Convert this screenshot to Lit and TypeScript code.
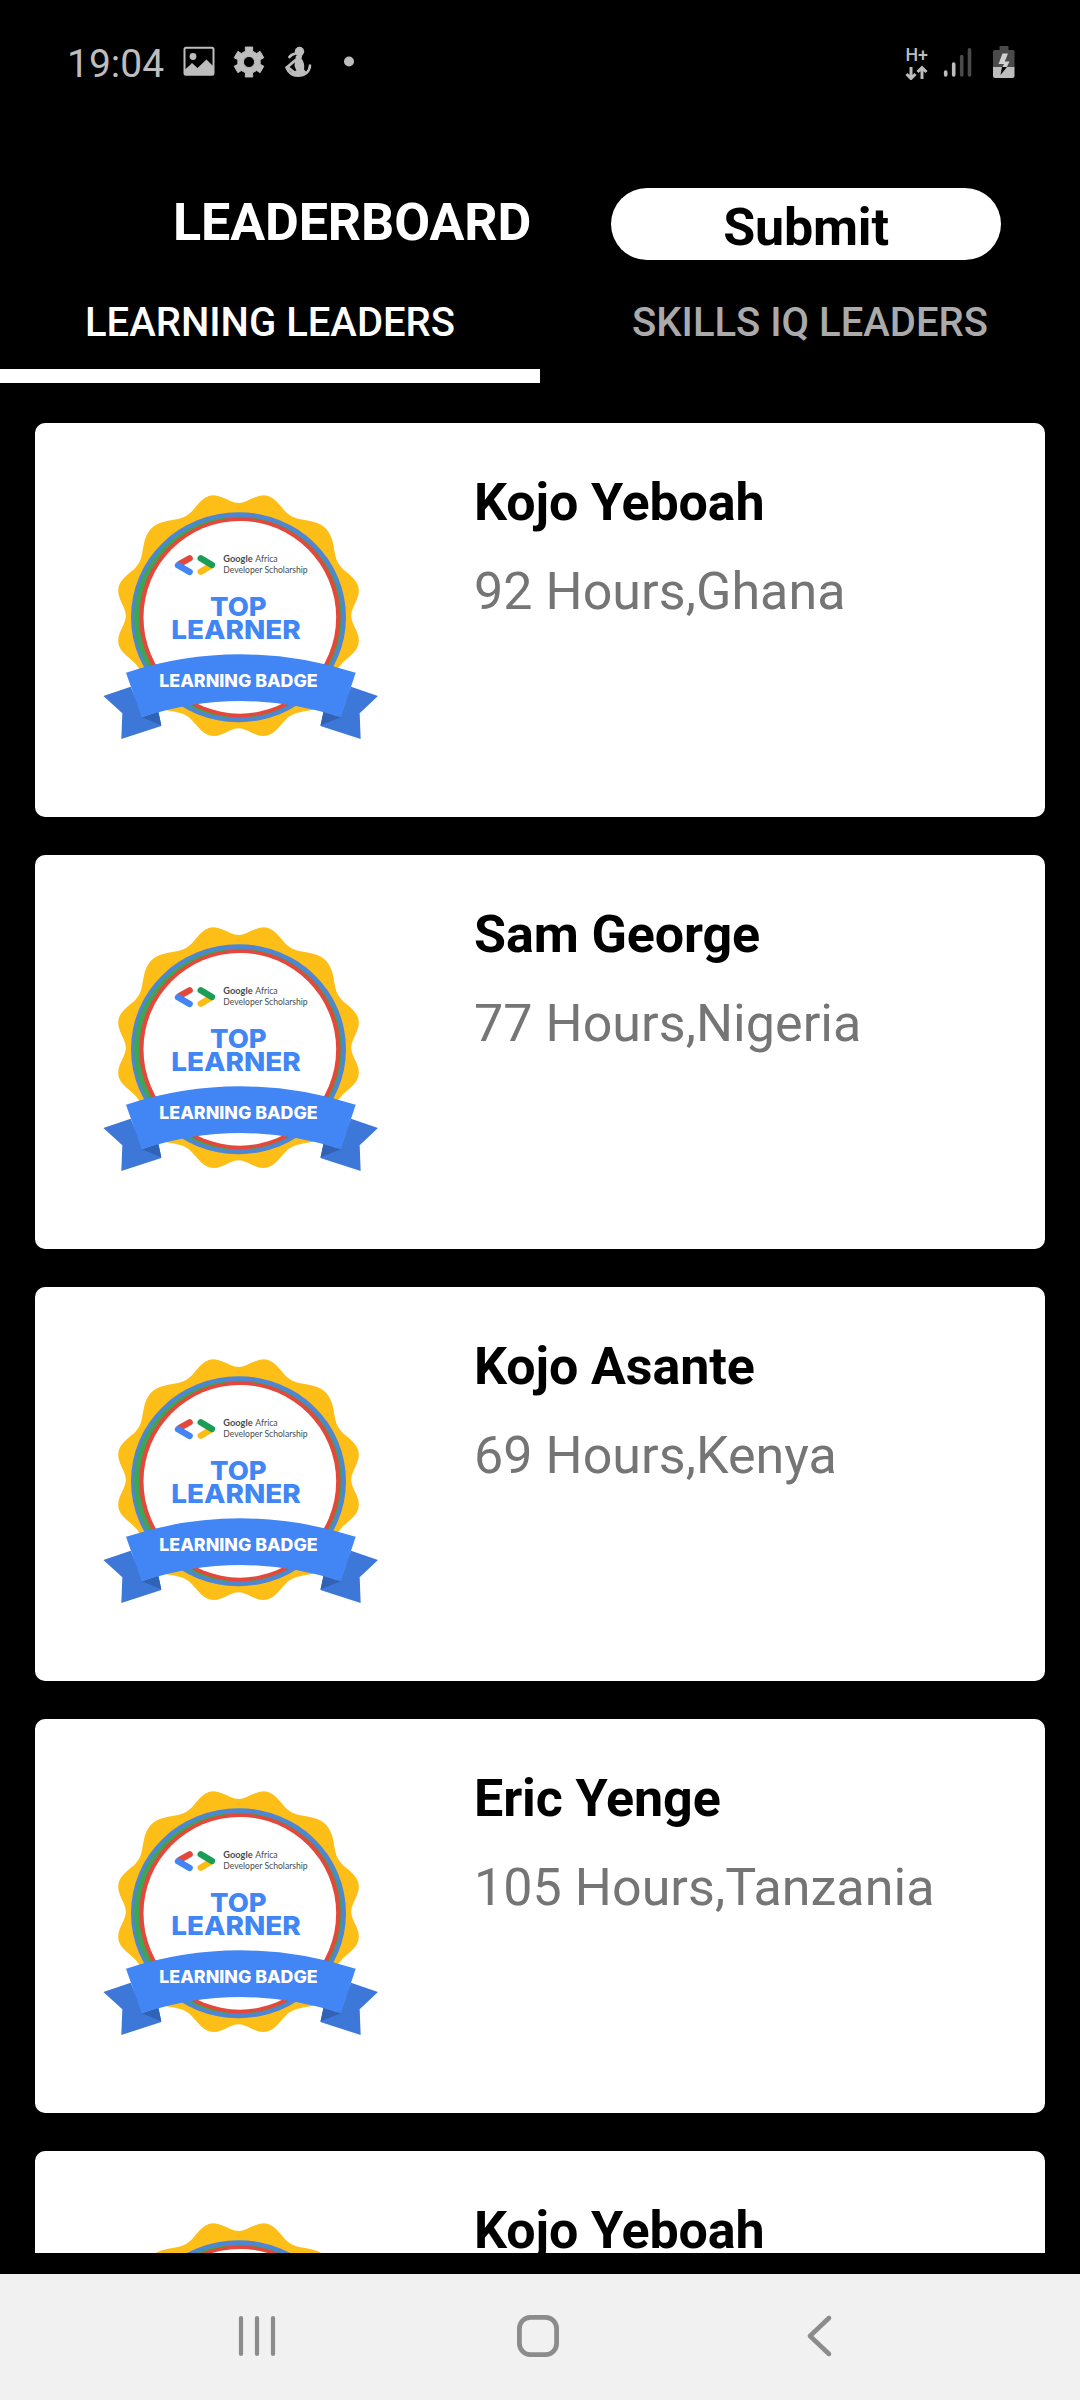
import { LitElement, html, css, svg } from "lit";
import { customElement, property } from "lit/decorators.js";

interface Leader {
  name: string;
  hours: number;
  country: string;
}

const LEADERS: Leader[] = [
  { name: "Kojo Yeboah", hours: 92, country: "Ghana" },
  { name: "Sam George", hours: 77, country: "Nigeria" },
  { name: "Kojo Asante", hours: 69, country: "Kenya" },
  { name: "Eric Yenge", hours: 105, country: "Tanzania" },
  { name: "Kojo Yeboah", hours: 92, country: "Ghana" },
];

/** Outline of the twelve-lobed rosette; the diagonal lobes are a little wider than the others. */
function rosette(cx: number, cy: number, base: number, wave: number): string {
  const points: string[] = [];
  for (let a = 0; a < 360; a += 2) {
    const t = (a * Math.PI) / 180;
    const phase = t + 0.035 * Math.sin(4 * t);
    const r = base - wave * Math.cos(12 * phase);
    points.push(`${(cx + r * Math.sin(t)).toFixed(1)} ${(cy - r * Math.cos(t)).toFixed(1)}`);
  }
  return `M${points.join("L")}Z`;
}

/** Closed outline of a cog with the given number of teeth. */
function cog(c: number, outer: number, inner: number, teeth: number): string {
  const points: string[] = [];
  const step = 360 / teeth;
  for (let i = 0; i < teeth; i++) {
    for (const [off, r] of [[-18, inner], [-14, outer], [14, outer], [18, inner]]) {
      const t = ((i * step + off) * Math.PI) / 180;
      points.push(`${(c + r * Math.sin(t)).toFixed(2)} ${(c - r * Math.cos(t)).toFixed(2)}`);
    }
  }
  return `M${points.join("L")}Z`;
}

const ROSETTE = rosette(445.5, 437, 354, 16);
const COG = cog(16, 15.4, 11.4, 6);

@customElement("status-bar")
class StatusBar extends LitElement {
  static styles = css`
    :host {
      display: flex;
      align-items: center;
      height: 124px;
      box-sizing: border-box;
      padding: 0 65px 0 67px;
      color: #bdbdbd;
      font: 400 39px/46px Roboto, sans-serif;
    }
    svg { display: block; flex: none; }
    .time { width: 116px; padding-top: 4px; }
    .icons { display: flex; align-items: center; gap: 18px; }
    .dot { margin-left: 12px; }
    .signals { display: flex; align-items: center; margin-left: auto; }
    .bars { margin-left: 13px; }
    .battery { margin-left: 21px; }
  `;
  render() {
    return html`
      <span class="time">19:04</span>
      <div class="icons">
        <svg width="32" height="32" viewBox="0 0 32 32">
          <rect x="1.500" y="1.700" width="29" height="27" rx="1.500" fill="none" stroke="#bdbdbd" stroke-width="2"/>
          <circle cx="10" cy="10.500" r="3.400" fill="#bdbdbd"/>
          <path d="M2 23.500L6 20L9 17L14.500 22L23.500 13.500L30 20V28.500H2Z" fill="#bdbdbd"/>
        </svg>
        <svg width="32" height="32" viewBox="0 0 32 32">
          <path fill="#bdbdbd" stroke="#bdbdbd" stroke-width="1" stroke-linejoin="round" fill-rule="evenodd" d="${COG}M16 10.500a5.500 5.500 0 1 0 0.010 0Z"/>
        </svg>
        <svg width="30" height="32" viewBox="0 0 30 32">
          <circle cx="16.500" cy="5.500" r="4.700" fill="#bdbdbd"/>
          <path d="M13 9.500L19.500 9L18.500 12.500Q22 17 21 24L14 26L11.500 20L12 14Z" fill="#bdbdbd"/>
          <path d="M6.500 11Q8 8.500 12.500 7.500M12 14.500L4.500 21L12 27" fill="none" stroke="#bdbdbd" stroke-width="2.800" stroke-linecap="round"/>
          <path d="M3.500 21.500C5.500 26.500 8.500 29.500 15 29.800C22 29.800 26.500 26 27 19.500" fill="none" stroke="#bdbdbd" stroke-width="2.600" stroke-linecap="round"/>
          <path d="M8.500 26L20 22.500L23.500 26Q19 30 14.500 30Q10 29.500 8.500 26Z" fill="#bdbdbd"/>
        </svg>
        <svg class="dot" width="12" height="12" viewBox="0 0 12 12"><circle cx="6" cy="5.500" r="5" fill="#bdbdbd"/></svg>
      </div>
      <div class="signals">
        <svg width="24" height="36" viewBox="0 0 24 36">
          <text x="0.500" y="16.500" font-family="Roboto" font-weight="500" font-size="19" textLength="22.500" lengthAdjust="spacingAndGlyphs" fill="#bdbdbd">H+</text>
          <path d="M6 23V34.500M1.500 30L6 34.500L10.500 30M17 35V23.500M12.500 28L17 23.500L21.500 28" fill="none" stroke="#bdbdbd" stroke-width="3"/>
        </svg>
        <svg class="bars" width="30" height="32" viewBox="0 0 30 32" stroke-width="3.600" stroke-linecap="round">
          <path d="M3.700 26V29M11.700 18V29" stroke="#bdbdbd"/>
          <path d="M19.700 10.500V29M27.500 3.800V29" stroke="#4a4a4a"/>
        </svg>
        <svg class="battery" width="22" height="34" viewBox="0 0 22 34">
          <path d="M6.500 1h9v4H20Q21.500 5 21.500 6.500V22H0V6.500Q0 5 1.500 5H6.500Z" fill="#4a4a4a"/>
          <path d="M0 22H21.500V31Q21.500 33 19.500 33H2Q0 33 0 31Z" fill="#bdbdbd"/>
          <path d="M9.500 8.500H15L11.800 16.500H16.500L13.800 22H9.600L11 19H5.500Z" fill="#d0d0d0"/>
          <path d="M9 22H14L7.500 30Z" fill="#000"/>
        </svg>
      </div>
    `;
  }
}

@customElement("learner-badge")
class LearnerBadge extends LitElement {
  static styles = css`
    :host { display: block; width: 300px; height: 290px; }
    svg { display: block; }
    .label { font-family: Inter, sans-serif; font-weight: 800; }
    .small { font-family: Lato, sans-serif; font-size: 28px; fill: #4a4a4a; }
    .strong { font-weight: 700; }
  `;
  render() {
    return html`
      <svg width="300" height="290" viewBox="0 0 900 870">
        <path d=${ROSETTE} fill="#fcbe17"/>
        <ellipse cx="445.500" cy="441.500" rx="322.500" ry="315" fill="#4d86d4"/>
        <ellipse cx="444" cy="442" rx="312" ry="302" fill="#3ea556"/>
        <ellipse cx="449.500" cy="442" rx="302" ry="300" fill="#e3483a"/>
        <ellipse cx="449.500" cy="442" rx="289" ry="289" fill="#fff"/>
        <g stroke-width="19" stroke-linecap="round" fill="none">
          <path d="M270 281L299 265" stroke="#e3483a"/>
          <path d="M264 286L299 306" stroke="#4285f4"/>
          <path d="M332 305L361 288" stroke="#fbbc15"/>
          <path d="M332 265L366 285" stroke="#1a9d54"/>
        </g>
        ${this.caption("Google", 400, 277, 88, "small strong")}
        ${this.caption("Africa", 496, 277, 67, "small")}
        ${this.caption("Developer Scholarship", 400, 308, 253, "small")}
        <g fill="#4285f4" font-size="78">
          ${this.caption("TOP", 360, 437, 170, "label")}
          ${this.caption("LEARNER", 244, 507, 388, "label")}
        </g>
        <path d="M40 678L122 650L160 740L205 726L214 768L94 807L97 730Z" fill="#3d78d8"/>
        <path d="M864 678L783 650L745 740L700 726L691 768L812 807L809 730Z" fill="#3d78d8"/>
        <path d="M155 742L205 724L214 766Z" fill="#3163b5"/>
        <path d="M753 742L701 724L692 766Z" fill="#3163b5"/>
        <path d="M108 608Q450 498 797 608L753 742Q450 644 155 742Z" fill="#4285f4"/>
        <g fill="#fff" font-size="51">
          ${this.caption("LEARNING BADGE", 208, 652, 475, "label")}
        </g>
      </svg>
    `;
  }
  private caption(text: string, x: number, y: number, width: number, cls: string) {
    return svg`<text class=${cls} x=${x} y=${y} textLength=${width} lengthAdjust="spacingAndGlyphs">${text}</text>`;
  }
}

@customElement("leader-card")
class LeaderCard extends LitElement {
  @property({ attribute: false }) leader!: Leader;

  static styles = css`
    :host {
      display: flex;
      flex: none;
      box-sizing: border-box;
      height: 394px;
      padding: 47px 40px 0 55px;
      border-radius: 10px;
      background: #fff;
      font: 400 52px/62px Roboto, sans-serif;
    }
    .info { padding: 2px 0 0 84px; }
    .name { color: #000; font-weight: 700; letter-spacing: -0.1px; white-space: nowrap; }
    .detail { color: #757575; margin-top: 27px; letter-spacing: 0.05px; white-space: nowrap; }
  `;
  render() {
    const { name, hours, country } = this.leader;
    return html`
      <learner-badge></learner-badge>
      <div class="info">
        <div class="name">${name}</div>
        <div class="detail">${hours} Hours,${country}</div>
      </div>
    `;
  }
}

@customElement("nav-bar")
class NavBar extends LitElement {
  static styles = css`
    :host {
      display: grid;
      grid-template-columns: 1fr 1fr 1fr;
      align-items: center;
      justify-items: center;
      box-sizing: border-box;
      height: 126px;
      padding: 0 119px 2px 116px;
      background: #f1f1f1;
    }
    svg { display: block; }
  `;
  render() {
    return html`
      <svg width="44" height="44" viewBox="0 0 44 44" fill="none" stroke="#8c8c8c" stroke-width="4.200" stroke-linecap="round"><path d="M6 4V40M22 4V40M38 4V40"/></svg>
      <svg width="44" height="44" viewBox="0 0 44 44" fill="none" stroke="#8c8c8c" stroke-width="4.800"><rect x="3.400" y="3.400" width="37.200" height="37.200" rx="11"/></svg>
      <svg width="44" height="44" viewBox="0 0 44 44" fill="none" stroke="#8c8c8c" stroke-width="4.600" stroke-linecap="round" stroke-linejoin="round"><path d="M31 4L12 22L31 40"/></svg>
    `;
  }
}

@customElement("app-root")
class AppRoot extends LitElement {
  static styles = css`
    :host {
      display: flex;
      flex-direction: column;
      width: 1080px;
      height: 2400px;
      overflow: hidden;
      background: #000;
      color: #fff;
      font-family: Roboto, sans-serif;
    }
    .header {
      display: flex;
      justify-content: space-between;
      height: 72px;
      padding: 64px 79px 0 173px;
      font-size: 52px;
      font-weight: 700;
      line-height: 62px;
    }
    .title { padding-top: 4px; letter-spacing: -0.1px; }
    .submit {
      width: 390px;
      height: 72px;
      padding: 2px 0 0;
      border: 0;
      border-radius: 36px;
      background: #fff;
      color: #000;
      font: inherit;
      line-height: 76px;
      letter-spacing: -0.2px;
    }
    .tabs { display: grid; grid-template-columns: 1fr 1fr; height: 123px; }
    .tab {
      box-sizing: border-box;
      padding-top: 38px;
      border-bottom: 14px solid transparent;
      text-align: center;
      font-size: 40px;
      font-weight: 500;
      line-height: 50px;
      color: #aaa;
    }
    .active { color: #fff; border-bottom-color: #fff; }
    .list {
      display: flex;
      flex-direction: column;
      gap: 38px;
      height: 1830px;
      margin: 40px 35px 21px;
      overflow: hidden;
    }
  `;
  render() {
    return html`
      <status-bar></status-bar>
      <header class="header">
        <span class="title">LEADERBOARD</span>
        <button class="submit">Submit</button>
      </header>
      <nav class="tabs">
        <div class="tab active">LEARNING LEADERS</div>
        <div class="tab">SKILLS IQ LEADERS</div>
      </nav>
      <main class="list">
        ${LEADERS.map((leader) => html`<leader-card .leader=${leader}></leader-card>`)}
      </main>
      <nav-bar></nav-bar>
    `;
  }
}
